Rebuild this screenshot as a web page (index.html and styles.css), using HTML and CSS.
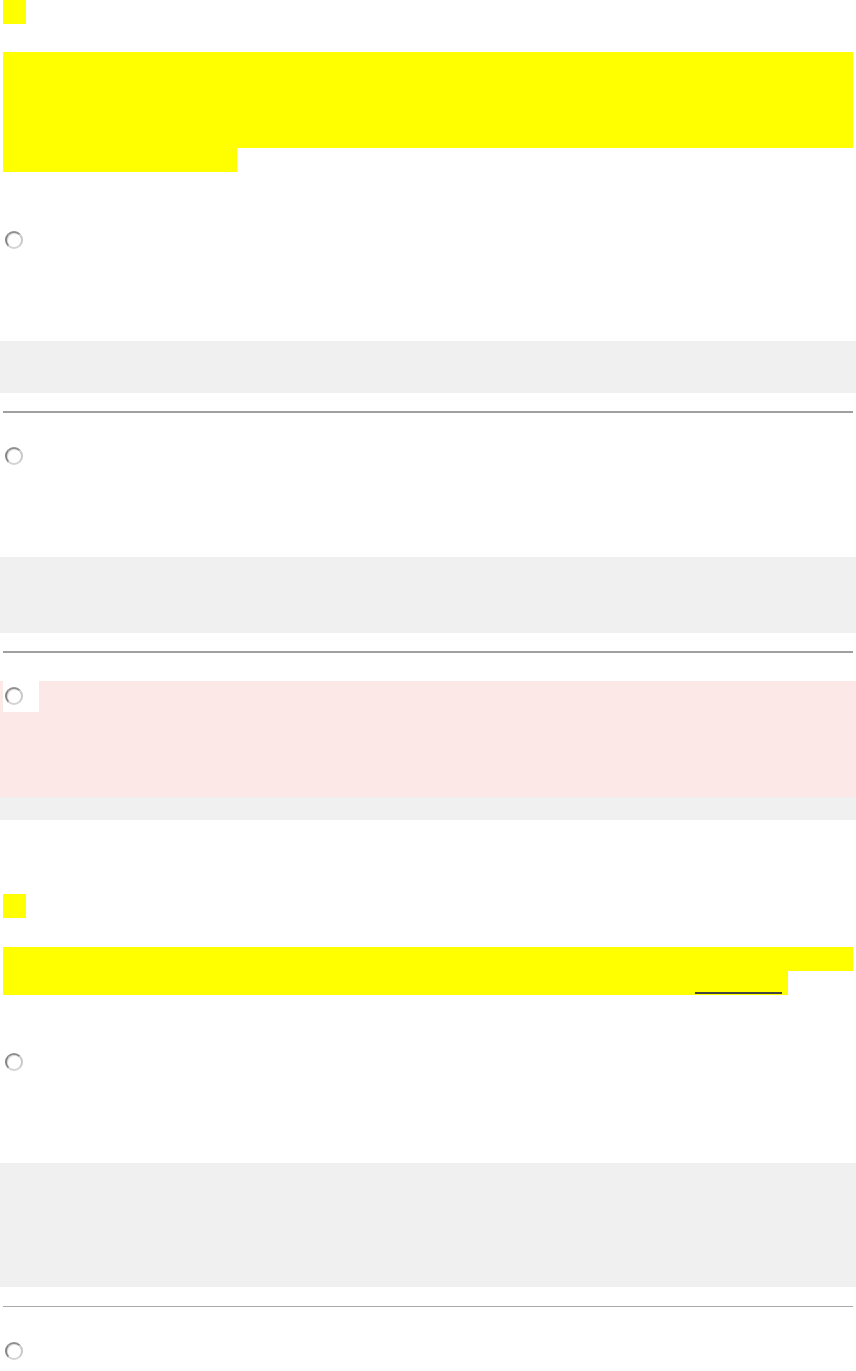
FILE: index.html
```html
<!DOCTYPE html>
<html lang="en">
<head>
<meta charset="utf-8">
<title>Quiz</title>
<link rel="stylesheet" href="styles.css">
</head>
<body>
<main class="quiz">
  <section class="q q-first">
    <div class="q-num"></div>
    <div class="q-text">
      <div class="hl-full"></div>
      <div class="hl-full"></div>
      <div class="hl-full"></div>
      <div class="hl-full"></div>
      <div class="hl-tail tail-1"></div>
    </div>
    <div class="opt opt-after-q">
      <label class="opt-mark"><input class="radio" type="radio" name="q1"></label>
    </div>
    <div class="expl expl-m"></div>
    <hr class="sep">
    <div class="opt opt-after-sep">
      <label class="opt-mark"><input class="radio" type="radio" name="q1"></label>
    </div>
    <div class="expl expl-l"></div>
    <hr class="sep">
    <div class="opt opt-after-sep opt-wrong">
      <label class="opt-mark"><input class="radio" type="radio" name="q1"></label>
    </div>
    <div class="expl expl-s"></div>
  </section>

  <section class="q q-second">
    <div class="q-num"></div>
    <div class="q-text">
      <div class="hl-full"></div>
      <div class="hl-tail tail-2"><span class="hl-link"></span></div>
    </div>
    <div class="opt opt-after-q">
      <label class="opt-mark"><input class="radio" type="radio" name="q2"></label>
    </div>
    <div class="expl expl-xl"></div>
    <hr class="sep sep-thin">
    <div class="opt opt-after-sep-thin">
      <label class="opt-mark"><input class="radio" type="radio" name="q2"></label>
    </div>
  </section>
</main>
</body>
</html>
```

FILE: styles.css
```css
html, body {
  margin: 0;
  padding: 0;
  background: #ffffff;
  font-family: "Liberation Sans", Arial, sans-serif;
  font-size: 16px;
}

.quiz {
  display: flex;
  flex-direction: column;
}

.q {
  display: flex;
  flex-direction: column;
}

.q-second {
  margin-top: 74px;
}

.q-num {
  width: 23px;
  height: 24px;
  margin-left: 3px;
  background: #ffff00;
}

.q-text {
  display: flex;
  flex-direction: column;
  align-items: flex-start;
  margin: 28px 3px 0;
}

.q-second .q-text {
  margin-top: 29px;
}

.hl-full {
  align-self: stretch;
  height: 24px;
  background: #ffff00;
}

.hl-tail {
  height: 24px;
  background: #ffff00;
  display: flex;
  align-items: flex-start;
}

.tail-1 {
  width: 234px;
}

.tail-2 {
  width: 785px;
}

.hl-link {
  margin-left: 692px;
  width: 87px;
  height: 21px;
  border-bottom: 2px solid #444444;
}

.opt {
  height: 116px;
  padding: 0 3px;
  display: flex;
  align-items: flex-start;
}

.opt-after-q {
  margin-top: 53px;
}

.q-second .opt-after-q {
  margin-top: 52px;
}

.opt-after-sep {
  margin-top: 28px;
}

.opt-after-sep-thin {
  margin-top: 29px;
}

.opt-wrong {
  background: #fde8e8;
}

.opt-mark {
  display: flex;
  width: 36px;
  height: 31px;
  box-sizing: border-box;
  padding: 6px 0 0 2px;
  background: #ffffff;
}

.radio {
  appearance: none;
  -webkit-appearance: none;
  margin: 0;
  width: 18px;
  height: 18px;
  box-sizing: border-box;
  border-radius: 50%;
  border: 2px solid;
  border-color: #8e8e8e #c8c8c8 #d4d4d4 #858585;
  background: #ffffff;
  box-shadow: inset 1px 1px 0 #e6e6e6;
}

.expl {
  background: #f0f0f0;
}

.expl-s { height: 23px; }
.expl-m { height: 52px; }
.expl-l { height: 76px; }
.expl-xl { height: 124px; }

.sep {
  margin: 18px 3px 0;
  height: 2px;
  border: 0;
  background: #a0a0a0;
}

.sep-thin {
  margin-top: 19px;
  height: 1px;
  background: #a8a8a8;
}
```
